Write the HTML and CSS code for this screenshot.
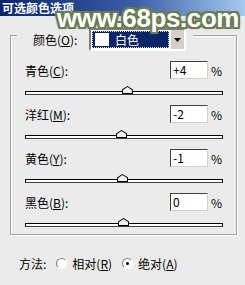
FILE: index.html
```html
<!DOCTYPE html>
<html lang="zh-CN">

<head>
    <meta charset="UTF-8">
    <title>可选颜色选项</title>
    <link rel="stylesheet" href="styles.css">
</head>

<body>
    <div class="dialog">
        <div class="titlebar">可选颜色选项</div>

        <div class="group">
            <div class="group-head">
                <span class="head-label">颜色(<u>O</u>):</span>
                <div class="select">
                    <div class="select-value">
                        <span class="swatch"></span>
                        <span>白色</span>
                    </div>
                    <div class="select-btn">
                        <svg width="7" height="4" viewBox="0 0 7 4"><path d="M0 0h7L3.5 4z" fill="#000"/></svg>
                    </div>
                </div>
            </div>

            <div class="channel">
                <div class="channel-row">
                    <span class="channel-label">青色(<u>C</u>):</span>
                    <span class="num">+4</span>
                    <span class="pct">%</span>
                </div>
                <div class="track"><span class="thumb" style="left: 52%"></span></div>
            </div>

            <div class="channel">
                <div class="channel-row">
                    <span class="channel-label">洋红(<u>M</u>):</span>
                    <span class="num">-2</span>
                    <span class="pct">%</span>
                </div>
                <div class="track"><span class="thumb" style="left: 49%"></span></div>
            </div>

            <div class="channel">
                <div class="channel-row">
                    <span class="channel-label">黄色(<u>Y</u>):</span>
                    <span class="num">-1</span>
                    <span class="pct">%</span>
                </div>
                <div class="track"><span class="thumb" style="left: 49.5%"></span></div>
            </div>

            <div class="channel">
                <div class="channel-row">
                    <span class="channel-label">黑色(<u>B</u>):</span>
                    <span class="num">0</span>
                    <span class="pct">%</span>
                </div>
                <div class="track"><span class="thumb" style="left: 50%"></span></div>
            </div>
        </div>

        <div class="method">
            <span>方法:</span>
            <label class="radio"><span class="dot"></span><span>相对(<u>R</u>)</span></label>
            <label class="radio"><span class="dot checked"></span><span>绝对(<u>A</u>)</span></label>
        </div>

        <div class="watermark">www.68ps.com</div>
    </div>
</body>

</html>
```

FILE: styles.css
```css
body {
    margin: 0;
    padding: 0;
    background-color: #ebebeb;
    font-family: "Noto Sans CJK SC", "Liberation Sans", sans-serif;
    font-size: 12px;
    color: #000;
}

.dialog {
    position: relative;
    width: 245px;
    height: 285px;
    overflow: hidden;
}

.titlebar {
    height: 16px;
    line-height: 15px;
    padding-left: 2px;
    background: linear-gradient(to right, #0a246a 0%, #3a5ea8 55%, #a6caf0 100%);
    color: #fff;
    font-weight: bold;
    font-size: 12px;
}

u {
    text-decoration: underline;
    text-underline-offset: 1px;
}

.group {
    box-sizing: border-box;
    width: 227px;
    height: 200px;
    margin: 19px 0 0 10px;
    padding: 0 14px;
    border: 1px solid #a0a0a0;
    box-shadow: 1px 1px 0 #fff, inset 1px 1px 0 #fff;
}

.group-head {
    display: flex;
    align-items: center;
    width: fit-content;
    margin: -8px 0 0 -8px;
    padding: 0 7px 0 16px;
    background-color: #ebebeb;
}

.head-label {
    width: 56px;
}

.select {
    display: flex;
    box-sizing: border-box;
    width: 97px;
    height: 23px;
    border: 2px solid;
    border-color: #808080 #fff #fff #808080;
    background-color: #fff;
}

.select-value {
    flex: 1;
    display: flex;
    align-items: center;
    gap: 6px;
    margin: 1px;
    padding-left: 3px;
    background-color: #0a246a;
    outline: 1px dotted #e8e0b0;
    outline-offset: -1px;
    color: #fff;
}

.swatch {
    width: 14px;
    height: 13px;
    background-color: #fff;
}

.select-btn {
    display: flex;
    align-items: center;
    justify-content: center;
    width: 13px;
    background-color: #d4d0c8;
    border-left: 1px solid #fff;
}

.channel {
    padding-top: 10px;
}

.channel-row {
    display: flex;
    align-items: center;
    height: 18px;
}

.channel-label {
    flex: 1;
}

.num {
    box-sizing: border-box;
    width: 38px;
    height: 18px;
    line-height: 16px;
    padding-left: 2px;
    border: 1px solid;
    border-color: #404040 #d4d0c8 #d4d0c8 #404040;
    background-color: #fff;
}

.pct {
    width: 14px;
    text-align: right;
}

.track {
    position: relative;
    box-sizing: border-box;
    width: 198px;
    height: 4px;
    margin-top: 12px;
    border: 1px solid #000;
    border-bottom-color: #404040;
    background-color: #fff;
}

.thumb {
    position: absolute;
    top: -6px;
    width: 11px;
    height: 8px;
    margin-left: -6px;
    background-color: #000;
    clip-path: polygon(50% 0, 100% 45%, 100% 100%, 0 100%, 0 45%);
}

.thumb::after {
    content: "";
    position: absolute;
    left: 1px;
    top: 1px;
    right: 1px;
    bottom: 1px;
    background-color: #f0f0f0;
    clip-path: polygon(50% 0, 100% 50%, 100% 100%, 0 100%, 0 50%);
}

.method {
    display: flex;
    align-items: center;
    gap: 8px;
    margin: 20px 0 0 19px;
}

.radio {
    display: flex;
    align-items: center;
    gap: 5px;
    margin-left: 2px;
}

.dot {
    position: relative;
    box-sizing: border-box;
    width: 11px;
    height: 11px;
    border-radius: 50%;
    border: 1px solid;
    border-color: #808080 #fff #fff #808080;
    background-color: #fff;
}

.dot.checked::after {
    content: "";
    position: absolute;
    left: 3px;
    top: 3px;
    width: 3px;
    height: 3px;
    border-radius: 50%;
    background-color: #000;
}

.watermark {
    position: absolute;
    left: 57px;
    top: 5px;
    font-family: "Liberation Sans", sans-serif;
    font-weight: bold;
    font-size: 26px;
    line-height: 1;
    letter-spacing: -0.4px;
    color: #fff;
    text-shadow:
        2px 0 0 #6a7b55, -2px 0 0 #6a7b55, 0 2px 0 #6a7b55, 0 -2px 0 #6a7b55,
        2px 2px 0 #6a7b55, -2px 2px 0 #6a7b55, 2px -2px 0 #6a7b55, -2px -2px 0 #6a7b55,
        0 0 4px #8a9a70;
}
```
